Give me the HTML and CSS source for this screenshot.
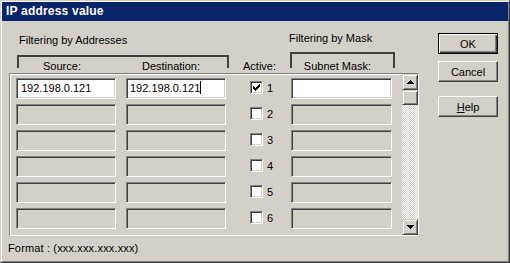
FILE: index.html
```html
<!DOCTYPE html>
<html>
<head>
<meta charset="utf-8">
<title>IP address value</title>
<link rel="stylesheet" href="styles.css">
</head>
<body>
<div class="window">
  <div class="frame">
    <div class="titlebar">IP address value</div>
    <div class="content">
      <div class="main">
        <div class="head">
          <div class="group addr">
            <div class="group-label">Filtering by Addresses</div>
            <div class="bracket">
              <span class="col col-src">Source:</span>
              <span class="col col-dst">Destination:</span>
            </div>
          </div>
          <div class="col col-active">Active:</div>
          <div class="group mask">
            <div class="group-label">Filtering by Mask</div>
            <div class="bracket">
              <span class="col col-mask">Subnet Mask:</span>
            </div>
          </div>
        </div>
        <div class="panel">
          <div class="rows">
            <div class="row">
              <div class="field on">192.198.0.121</div>
              <div class="field dst on">192.198.0.121<span class="caret"></span></div>
              <div class="active"><span class="check"><svg width="7" height="7" viewBox="0 0 7 7" shape-rendering="crispEdges"><rect x="6" y="0" width="1" height="1"/><rect x="5" y="1" width="2" height="1"/><rect x="0" y="2" width="1" height="1"/><rect x="4" y="2" width="3" height="1"/><rect x="0" y="3" width="2" height="1"/><rect x="3" y="3" width="3" height="1"/><rect x="0" y="4" width="5" height="1"/><rect x="1" y="5" width="3" height="1"/><rect x="2" y="6" width="1" height="1"/></svg></span><span class="num">1</span></div>
              <div class="field mask on"></div>
            </div>
            <div class="row">
              <div class="field"></div>
              <div class="field dst"></div>
              <div class="active"><span class="check"></span><span class="num">2</span></div>
              <div class="field mask"></div>
            </div>
            <div class="row">
              <div class="field"></div>
              <div class="field dst"></div>
              <div class="active"><span class="check"></span><span class="num">3</span></div>
              <div class="field mask"></div>
            </div>
            <div class="row">
              <div class="field"></div>
              <div class="field dst"></div>
              <div class="active"><span class="check"></span><span class="num">4</span></div>
              <div class="field mask"></div>
            </div>
            <div class="row">
              <div class="field"></div>
              <div class="field dst"></div>
              <div class="active"><span class="check"></span><span class="num">5</span></div>
              <div class="field mask"></div>
            </div>
            <div class="row">
              <div class="field"></div>
              <div class="field dst"></div>
              <div class="active"><span class="check"></span><span class="num">6</span></div>
              <div class="field mask"></div>
            </div>
          </div>
          <div class="scrollbar">
            <div class="sb-btn"><svg width="7" height="4" viewBox="0 0 7 4" shape-rendering="crispEdges"><rect x="3" y="0" width="1" height="1"/><rect x="2" y="1" width="3" height="1"/><rect x="1" y="2" width="5" height="1"/><rect x="0" y="3" width="7" height="1"/></svg></div>
            <div class="sb-thumb"></div>
            <div class="sb-track"></div>
            <div class="sb-btn"><svg width="7" height="4" viewBox="0 0 7 4" shape-rendering="crispEdges"><rect x="0" y="0" width="7" height="1"/><rect x="1" y="1" width="5" height="1"/><rect x="2" y="2" width="3" height="1"/><rect x="3" y="3" width="1" height="1"/></svg></div>
          </div>
        </div>
        <div class="format">Format : (xxx.xxx.xxx.xxx)</div>
      </div>
      <div class="buttons">
        <button class="btn default">OK</button>
        <button class="btn cancel">Cancel</button>
        <button class="btn help"><u>H</u>elp</button>
      </div>
    </div>
  </div>
</div>
</body>
</html>
```

FILE: styles.css
```css
* { box-sizing: border-box; }
html, body { margin: 0; padding: 0; }
body {
  width: 510px;
  height: 263px;
  overflow: hidden;
  font-family: "Liberation Sans", Arial, sans-serif;
  font-size: 11px;
  color: #000;
  background: #d4d0c8;
}
.window {
  width: 510px;
  height: 263px;
  border: 1px solid;
  border-color: #d4d0c8 #404040 #404040 #d4d0c8;
}
.frame {
  height: 100%;
  border: 1px solid;
  border-color: #fff #808080 #808080 #fff;
  display: flex;
  flex-direction: column;
}
.titlebar {
  height: 19px;
  line-height: 19px;
  background: #0a246a;
  color: #fff;
  font-weight: bold;
  font-size: 12px;
  letter-spacing: 0.2px;
  padding-left: 4px;
}
.content { flex: 1; display: flex; }
.main { width: 417px; padding-left: 7px; }

.head {
  height: 52px;
  display: flex;
  align-items: flex-end;
}
.group-label { line-height: 13px; }
.addr { margin-left: 8px; width: 212px; }
.addr .group-label { padding-left: 2px; margin-bottom: 8px; }
.mask { width: 106px; }
.mask .group-label { margin-bottom: 7px; }
.bracket {
  position: relative;
  display: flex;
  line-height: 13px;
}
.bracket::before {
  content: "";
  position: absolute;
  left: 0;
  right: 0;
  top: 0;
  border: 2px solid #404040;
  border-bottom: none;
}
.addr .bracket { padding-top: 5px; }
.addr .bracket::before { height: 11px; }
.mask .bracket { padding-top: 8px; margin-left: 1px; width: 105px; }
.mask .bracket::before { height: 14px; }
.col { line-height: 13px; }
.col-src { width: 90px; text-align: center; }
.col-dst { width: 122px; text-align: center; padding-left: 6px; }
.col-active { width: 60px; padding-left: 14px; }
.col-mask { width: 100%; text-align: center; padding-right: 10px; }

.panel {
  width: 410px;
  height: 163px;
  display: flex;
  border: 1px solid;
  border-color: #808080 #fff #fff #808080;
  box-shadow: inset 1px 1px 0 #fff;
}
.rows {
  flex: 1;
  display: flex;
  flex-direction: column;
  gap: 5px;
  padding: 4px 10px 0 6px;
}
.row {
  display: flex;
  align-items: center;
  height: 21px;
}
.field {
  width: 100px;
  height: 21px;
  line-height: 19px;
  padding-left: 4px;
  border: 1px solid;
  border-color: #808080 #fff #fff #808080;
  box-shadow: inset 1px 1px 0 #404040, inset -1px -1px 0 #d4d0c8;
  white-space: nowrap;
}
.field.on { background: #fff; }
.field.dst { margin-left: 10px; padding-left: 3px; }
.field.mask { width: 101px; }
.caret {
  display: inline-block;
  width: 1px;
  height: 13px;
  background: #000;
  vertical-align: -2px;
}
.active {
  width: 65px;
  padding-left: 24px;
  display: flex;
  align-items: center;
}
.check {
  width: 13px;
  height: 13px;
  background: #fff;
  border: 1px solid;
  border-color: #808080 #fff #fff #808080;
  box-shadow: inset 1px 1px 0 #404040, inset -1px -1px 0 #d4d0c8;
  display: flex;
  align-items: center;
  justify-content: center;
  margin-top: -2px;
}
.check svg { display: block; }
.num { margin-left: 4px; line-height: 13px; }

.scrollbar {
  width: 16px;
  display: flex;
  flex-direction: column;
}
.sb-btn, .sb-thumb {
  background: #d4d0c8;
  border: 1px solid;
  border-color: #d4d0c8 #404040 #404040 #d4d0c8;
  box-shadow: inset 1px 1px 0 #fff, inset -1px -1px 0 #808080;
}
.sb-btn {
  height: 16px;
  display: flex;
  align-items: center;
  justify-content: center;
}
.sb-btn svg { display: block; }
.sb-thumb { height: 15px; }
.sb-track {
  flex: 1;
  background: repeating-conic-gradient(#ffffff 0 25%, #d4d0c8 0 50%) 0 0 / 2px 2px;
}

.format {
  margin-left: -1px;
  margin-top: 6px;
  line-height: 13px;
  letter-spacing: 0.15px;
}

.buttons {
  margin-left: 19px;
  padding-top: 12px;
  display: flex;
  flex-direction: column;
  align-items: flex-start;
}
.btn {
  width: 60px;
  height: 21px;
  padding: 0;
  font-family: "Liberation Sans", Arial, sans-serif;
  font-size: 11px;
  color: #000;
  background: #d4d0c8;
  border: 1px solid;
  border-color: #fff #404040 #404040 #fff;
  box-shadow: inset -1px -1px 0 #808080;
}
.btn.default {
  border: 1px solid #000;
  box-shadow: inset 1px 1px 0 #fff, inset -1px -1px 0 #404040, inset -2px -2px 0 #808080;
}
.btn.cancel { margin-top: 7px; }
.btn.help { margin-top: 14px; }
```
